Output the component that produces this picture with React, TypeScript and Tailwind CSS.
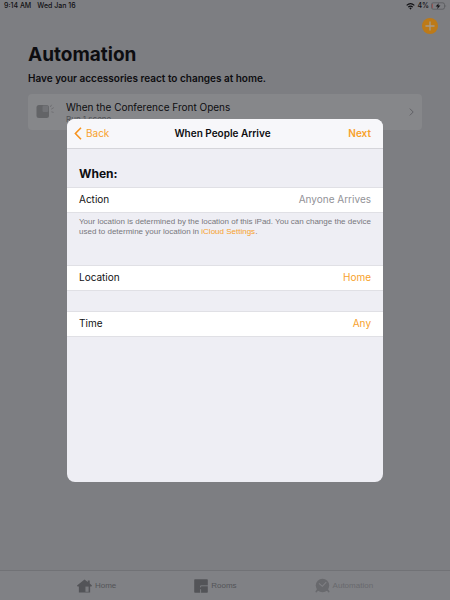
import type { ReactNode } from 'react';

interface SettingRowProps {
  label: string;
  value: string;
  muted?: boolean;
}

const tabs = [
  { name: 'Home', icon: <HomeIcon /> },
  { name: 'Rooms', icon: <RoomsIcon /> },
  { name: 'Automation', icon: <ClockIcon />, active: true },
];

function HomeIcon() {
  return (
    <svg viewBox="0 0 16 14" className="h-[14px] w-[15px]" fill="currentColor" aria-hidden="true">
      <path d="M8 0 L11.5 2.6 V1.2 H13.6 V4.3 L16 6.4 L15.4 7.6 H14 V14 H2 V7.6 H0.6 L0 6.4 Z" />
      <path d="M9 7.6 H12.4 V13.2 H9 Z" fill="#7a7b7f" />
    </svg>
  );
}

function RoomsIcon() {
  return (
    <svg viewBox="0 0 14 14" className="h-[14px] w-[14px]" aria-hidden="true">
      <rect x="0.2" y="0.2" width="13.6" height="13.6" rx="0.8" fill="currentColor" />
      <path d="M6.6 14 V10.2 M6.6 8.4 V6.8 H14" fill="none" stroke="#7a7b7f" strokeWidth="1" />
    </svg>
  );
}

function ClockIcon() {
  return (
    <svg viewBox="0 0 16 15" className="h-[15px] w-[15px]" aria-hidden="true">
      <path d="M3 11.8 L1.4 14 M13 11.8 L14.6 14" stroke="currentColor" strokeWidth="1.8" strokeLinecap="round" />
      <circle cx="8" cy="7.4" r="7.2" fill="currentColor" />
      <path d="M4.2 5.2 L7.8 8.4 L12 4" fill="none" stroke="#808185" strokeWidth="1.1" />
    </svg>
  );
}

function SensorIcon() {
  return (
    <svg viewBox="0 0 20 16" className="h-4 w-5 shrink-0" aria-hidden="true">
      <rect x="0.5" y="1" width="12.5" height="13" rx="2.5" fill="#636467" />
      <rect x="6.5" y="1.6" width="5.8" height="6.4" rx="1.2" fill="#717276" />
      <path d="M14.3 3 L15.6 0.8 M15.2 5.2 L17.8 3.6 M15.4 7.8 L17.6 8.4" stroke="#696a6d" strokeWidth="0.8" fill="none" />
    </svg>
  );
}

function StatusBar() {
  return (
    <div className="flex h-3 items-center justify-between pl-1 pr-[3px] text-[7px] font-medium leading-3 text-[#101013]">
      <div className="flex gap-[6px]">
        <span>9:14 AM</span>
        <span>Wed Jan 16</span>
      </div>
      <div className="flex items-center gap-[2px]">
        <svg viewBox="0 0 10 8" className="h-[7px] w-[9px]" fill="none" stroke="currentColor" strokeWidth="1.3" aria-hidden="true">
          <path d="M0.6 2.8 Q5 -1.2 9.4 2.8" />
          <path d="M2.4 4.7 Q5 2.5 7.6 4.7" />
          <path d="M3.6 5.8 Q5 4.7 6.4 5.8 L5 7.6 Z" fill="currentColor" stroke="none" />
        </svg>
        <span>4%</span>
        <svg viewBox="0 0 16 8" className="h-2 w-4" aria-hidden="true">
          <rect x="0.5" y="0.8" width="13" height="6.4" rx="1.8" fill="none" stroke="#4c4d50" strokeWidth="0.6" />
          <path d="M1.4 2 V6" stroke="#a04040" strokeWidth="0.7" />
          <path d="M14.6 2.8 Q15.8 4 14.6 5.2 Z" fill="#4c4d50" />
          <path d="M7.8 1.2 L4.6 4.5 H6.8 L6.2 6.9 L9.4 3.6 H7.2 Z" fill="currentColor" />
        </svg>
      </div>
    </div>
  );
}

function Group({ children }: { children: ReactNode }) {
  return <div className="border-y border-[#e0e0e5] bg-white">{children}</div>;
}

function SettingRow({ label, value, muted }: SettingRowProps) {
  return (
    <button type="button" className="flex h-6 w-full items-center justify-between px-3 text-[10px]">
      <span className="text-[#111113]">{label}</span>
      <span className={muted ? 'text-[#929297]' : 'text-[#f7a12b]'}>{value}</span>
    </button>
  );
}

export default function App() {
  return (
    <div className="flex min-h-screen flex-col bg-[#7d7e82] font-['Inter','Liberation_Sans',sans-serif] text-[#0d0d10]">
      <StatusBar />

      <main className="flex-1 px-7">
        <div className="-mr-4 flex justify-end pt-[6px]">
          <button type="button" aria-label="Add automation" className="flex h-4 w-4 items-center justify-center rounded-full bg-[#bd7a18]">
            <svg viewBox="0 0 10 10" className="h-[10px] w-[10px]" stroke="#a79c8a" strokeWidth="1.3" aria-hidden="true">
              <path d="M5 0.5 V9.5 M0.5 5 H9.5" />
            </svg>
          </button>
        </div>
        <h1 className="mt-[9px] text-[19px] font-bold leading-6">Automation</h1>
        <p className="mt-[3px] text-[10px] font-semibold leading-4">Have your accessories react to changes at home.</p>

        <button type="button" className="mt-2 flex h-9 w-full items-center rounded-[4px] bg-[#86878a] pl-2 pr-2 text-left">
          <SensorIcon />
          <span className="ml-[10px] flex-1">
            <span className="block text-[10px] leading-[14px]">When the Conference Front Opens</span>
            <span className="block text-[8px] leading-[10px] text-[#505155]">Run 1 scene</span>
          </span>
          <svg viewBox="0 0 5 8" className="h-2 w-[5px]" fill="none" stroke="#606165" strokeWidth="1" aria-hidden="true">
            <path d="M0.8 0.6 L4.2 4 L0.8 7.4" />
          </svg>
        </button>
      </main>

      <nav className="flex h-[30px] items-center justify-center gap-[78px] border-t border-[#717276] bg-[#808185] font-['Liberation_Sans',sans-serif]">
        {tabs.map((tab) => (
          <a
            key={tab.name}
            href={`#${tab.name.toLowerCase()}`}
            className={`flex items-center gap-[3px] text-[8px] ${tab.active ? 'text-[#68696d]' : 'text-[#535458]'}`}
          >
            {tab.icon}
            {tab.name}
          </a>
        ))}
      </nav>

      <div className="fixed inset-0 flex items-center justify-center px-[67px]">
        <section role="dialog" aria-labelledby="dialog-title" className="min-h-[363px] w-full overflow-hidden rounded-[8px] bg-[#eeeef4]">
          <header className="grid h-[30px] grid-cols-3 items-center border-b border-[#d5d5da] bg-[#f7f7fa] pl-[7px] pr-3 text-[10px]">
            <button type="button" className="flex items-center gap-1 justify-self-start text-[#f7a12b]">
              <svg viewBox="0 0 8 13" className="h-[13px] w-2" fill="none" stroke="#f7931e" strokeWidth="1.6" aria-hidden="true">
                <path d="M7 0.8 L1.4 6.5 L7 12.2" />
              </svg>
              Back
            </button>
            <h2 id="dialog-title" className="whitespace-nowrap text-center font-semibold text-[#0d0d10]">When People Arrive</h2>
            <button type="button" className="justify-self-end font-semibold text-[#f7a12b]">Next</button>
          </header>

          <h3 className="px-3 pb-1 pt-4 text-[12px] font-bold leading-[18px]">When:</h3>
          <Group>
            <SettingRow label="Action" value="Anyone Arrives" muted />
          </Group>
          <p className="px-3 pb-7 pt-1 font-['Liberation_Sans',sans-serif] text-[8px] leading-[10px] text-[#77777c]">
            Your location is determined by the location of this iPad. You can change the device used to determine your location in{' '}
            <a href="#icloud" className="text-[#f7a12b]">iCloud Settings</a>.
          </p>
          <Group>
            <SettingRow label="Location" value="Home" />
          </Group>
          <div className="mt-5">
            <Group>
              <SettingRow label="Time" value="Any" />
            </Group>
          </div>
        </section>
      </div>
    </div>
  );
}
